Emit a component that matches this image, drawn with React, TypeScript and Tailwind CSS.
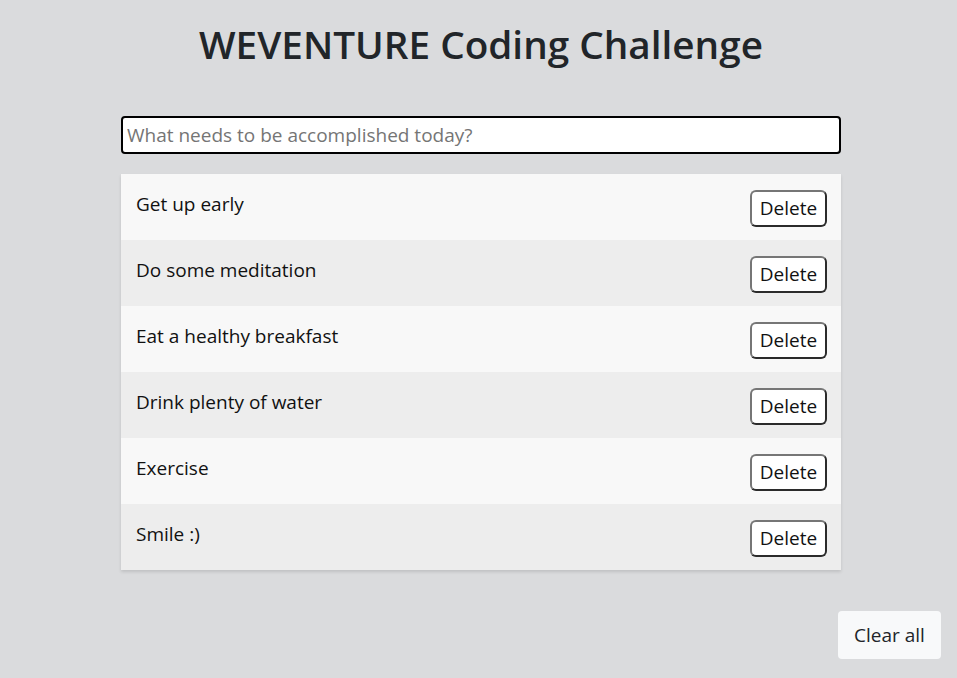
import React, { useState } from 'react';

const initialTodos = [
  'Get up early',
  'Do some meditation',
  'Eat a healthy breakfast',
  'Drink plenty of water',
  'Exercise',
  'Smile :)',
];

const App: React.FC = () => {
  const [todos, setTodos] = useState<string[]>(initialTodos);
  const [text, setText] = useState('');

  return (
    <div className="min-h-[678px] bg-[#dadbdd] font-['Open_Sans',sans-serif] text-[#212529]">
      <div className="ml-[121px] w-[720px] pt-[20px]">
        <h1 className="text-center text-[38.7px] font-semibold leading-[48px]">WEVENTURE Coding Challenge</h1>

        <form
          className="mt-[48px]"
          onSubmit={e => {
            e.preventDefault();
            if (text.trim()) setTodos([...todos, text.trim()]);
            setText('');
          }}
        >
          <input
            value={text}
            onChange={e => setText(e.target.value)}
            placeholder="What needs to be accomplished today?"
            className="block h-[38px] w-full rounded-[4px] border-2 border-black bg-white px-[4px] text-[19px] outline-none placeholder:text-[#757575]"
          />
        </form>

        <ul className="mt-[20px] shadow-[0_2px_3px_rgba(0,0,0,0.12)]">
          {todos.map((todo, i) => (
            <li
              key={i}
              className={`flex h-[66px] items-center justify-between pl-[15px] pr-[14px] ${i % 2 === 0 ? 'bg-[#f8f8f8]' : 'bg-[#ededed]'}`}
            >
              <span className="-mt-[5px] text-[19px] text-[#111]">{todo}</span>
              <button
                onClick={() => setTodos(todos.filter((_, j) => j !== i))}
                className="mt-[2px] h-[37px] w-[77px] rounded-[6px] border-2 border-t-[#767676] border-l-[#767676] border-r-[#2b2b2b] border-b-[#2b2b2b] bg-white text-[19px] leading-none text-[#111]"
              >
                Delete
              </button>
            </li>
          ))}
        </ul>
      </div>

      <div className="flex justify-end pr-[16px] pt-[40px]">
        <button
          onClick={() => setTodos([])}
          className="mt-[1px] h-[48px] w-[103px] rounded-[4px] bg-[#f8f9fa] text-[19px]"
        >
          Clear all
        </button>
      </div>
    </div>
  );
};

export default App;
